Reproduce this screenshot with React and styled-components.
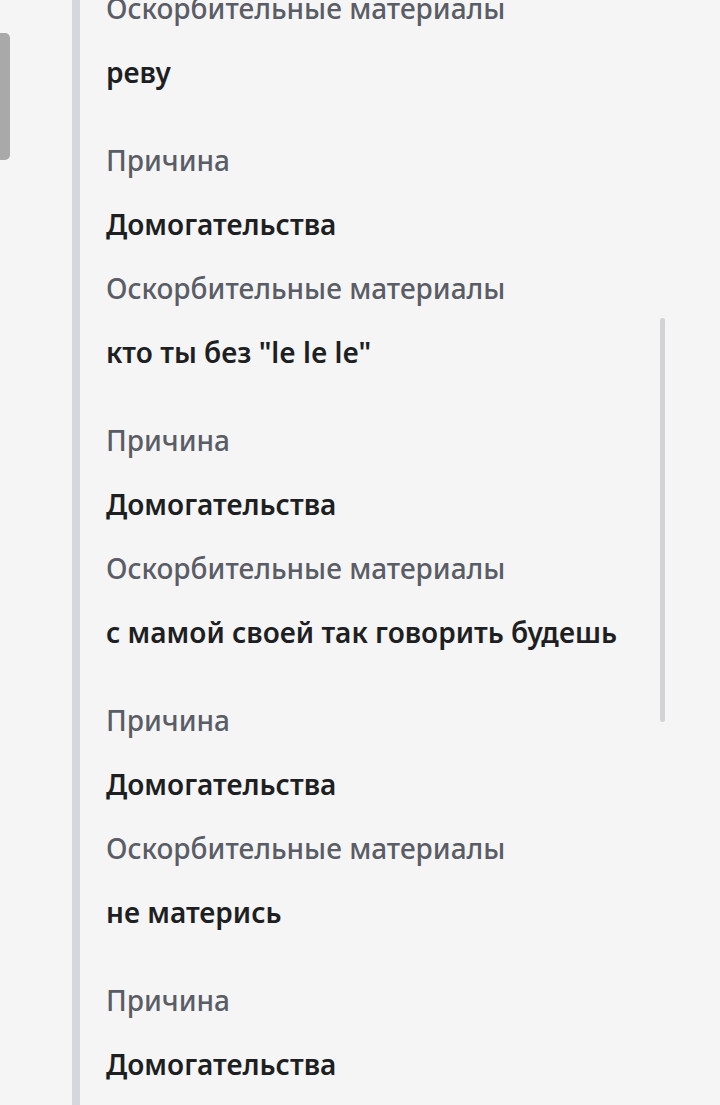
import React from 'react';
import styled, { createGlobalStyle } from 'styled-components';

const GlobalStyle = createGlobalStyle`
    html, body {
        margin: 0;
        padding: 0;
        background-color: #f5f5f6;
        overflow: hidden;
    }
    body {
        font-family: "Noto Sans", "Open Sans", sans-serif;
    }
`;

const Page = styled.div`
    display: flex;
    height: 1105px;
    overflow: hidden;
    position: relative;
`;

const Rail = styled.div`
    width: 72px;
    flex-shrink: 0;
    padding-top: 33px;
`;

const RailThumb = styled.div`
    width: 10px;
    height: 127px;
    background-color: #a9a9a9;
    border-radius: 0 5px 5px 0;
`;

const Thread = styled.div`
    flex: 1;
    border-left: 8px solid #d4d7dc;
    padding-left: 26px;
    position: relative;
`;

const List = styled.div`
    display: flex;
    flex-direction: column;
    margin-top: -24px;
`;

const Line = styled.div`
    height: 64px;
    line-height: 64px;
    font-size: 28px;
    white-space: nowrap;
    color: ${({ $muted }) => ($muted ? '#5a5d65' : '#1e1f22')};
    font-weight: ${({ $muted }) => ($muted ? 500 : 600)};
    margin-bottom: ${({ $last }) => ($last ? '24px' : '0')};
`;

const ScrollHint = styled.div`
    position: absolute;
    left: 580px;
    top: 318px;
    width: 5px;
    height: 404px;
    border-radius: 3px;
    background-color: #d2d2d7;
`;

const reports = [
    { comment: 'кто ты без "le le le"' },
    { comment: 'с мамой своей так говорить будешь' },
    { comment: 'не матерись' },
    { comment: null },
];

const App = () => {
    return (
        <>
            <GlobalStyle />
            <Page>
                <Rail>
                    <RailThumb />
                </Rail>
                <Thread>
                    <List>
                        <Line $muted>Оскорбительные материалы</Line>
                        <Line $last>реву</Line>
                        {reports.map((r, i) => (
                            <React.Fragment key={i}>
                                <Line $muted>Причина</Line>
                                <Line>Домогательства</Line>
                                {r.comment && (
                                    <>
                                        <Line $muted>Оскорбительные материалы</Line>
                                        <Line $last>{r.comment}</Line>
                                    </>
                                )}
                            </React.Fragment>
                        ))}
                    </List>
                    <ScrollHint />
                </Thread>
            </Page>
        </>
    );
};

export default App;
